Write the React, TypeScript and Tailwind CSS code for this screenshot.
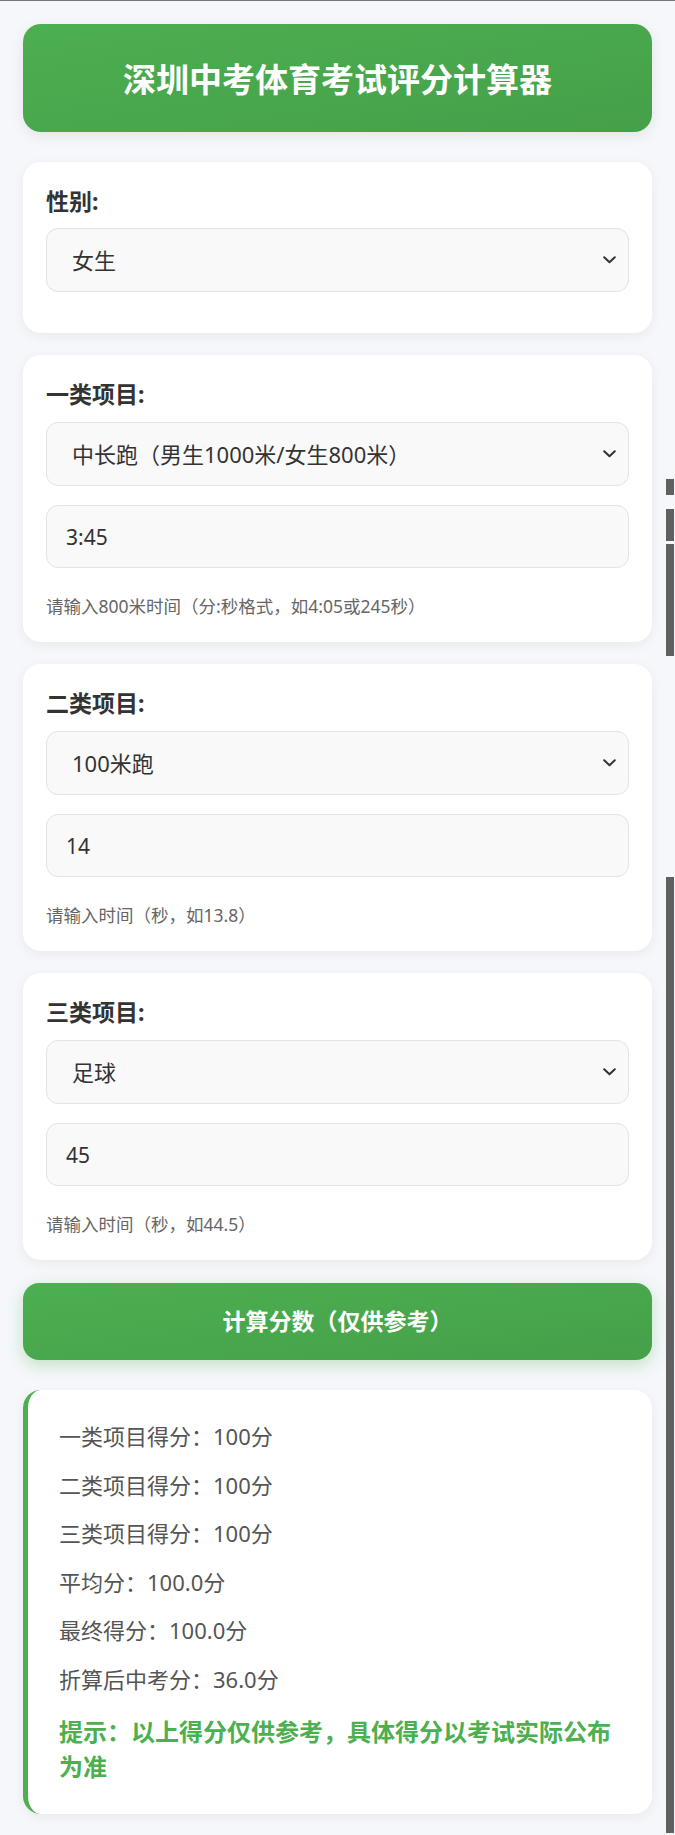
import { useState } from 'react';

interface FieldCardProps {
    label: string;
    options: string[];
    value?: string;
    hint?: string;
}

const Chevron = () => (
    <svg className="pointer-events-none absolute right-[13px] top-1/2 -translate-y-1/2" width="13" height="8" viewBox="0 0 13 8" fill="none">
        <path d="M1.2 1.2 6.5 6.3l5.3-5.1" stroke="#333" strokeWidth="2" strokeLinecap="round" strokeLinejoin="round" />
    </svg>
);

const SelectBox = ({ options, defaultValue }: { options: string[]; defaultValue?: string }) => (
    <div className="relative">
        <select
            defaultValue={defaultValue ?? options[0]}
            className="block h-[64px] w-full appearance-none rounded-[12px] border border-[#e3e3e3] bg-[#f9f9f9] pl-[25px] pr-10 text-[22px] text-[#333] outline-none"
        >
            {options.map((o) => (
                <option key={o}>{o}</option>
            ))}
        </select>
        <Chevron />
    </div>
);

const FieldCard = ({ label, options, value, hint }: FieldCardProps) => {
    const [text, setText] = useState(value ?? '');

    return (
        <div className="flex flex-col rounded-[18px] bg-white p-[23px] shadow-[0_3px_12px_rgba(0,0,0,0.06)]">
            <label className="mb-[11px] block text-[23px] font-bold leading-[33px] text-[#333]">{label}</label>
            <SelectBox options={options} />
            <input
                value={text}
                onChange={(e) => setText(e.target.value)}
                className="mt-[19px] block h-[63px] w-full rounded-[12px] border border-[#e3e3e3] bg-[#f9f9f9] pl-[19px] text-[21px] text-[#333] outline-none"
            />
            {hint && <p className="mt-[26px] text-[17.5px] leading-[25px] text-[#666]">{hint}</p>}
        </div>
    );
};

const results = ['一类项目得分：100分', '二类项目得分：100分', '三类项目得分：100分', '平均分：100.0分', '最终得分：100.0分', '折算后中考分：36.0分'];

const App = () => {
    return (
        <div className="relative min-h-[1835px] border-t border-[#777] bg-[#f5f7fa] px-[23px] pb-[22px] pt-[23px] font-['Noto_Sans','Noto_Sans_CJK_SC','Microsoft_YaHei',sans-serif]">
            <div className="mb-[30px] flex h-[108px] items-center justify-center rounded-[18px] bg-gradient-to-br from-[#4caf50] to-[#45a049] shadow-[0_4px_14px_rgba(0,0,0,0.08)]">
                <h1 className="font-['Noto_Sans_CJK_SC',sans-serif] text-[33px] font-bold leading-none text-white">深圳中考体育考试评分计算器</h1>
            </div>

            <div className="flex flex-col gap-[22px]">
                <div className="flex flex-col rounded-[18px] bg-white p-[23px] shadow-[0_3px_12px_rgba(0,0,0,0.06)]">
                    <label className="mb-[10px] block text-[23px] font-bold leading-[33px] text-[#333]">性别:</label>
                    <SelectBox options={['男生', '女生']} defaultValue="女生" />
                    <div className="h-[18px]" />
                </div>
                <FieldCard label="一类项目:" options={['中长跑（男生1000米/女生800米）']} value="3:45" hint="请输入800米时间（分:秒格式，如4:05或245秒）" />
                <FieldCard label="二类项目:" options={['100米跑']} value="14" hint="请输入时间（秒，如13.8）" />
                <FieldCard label="三类项目:" options={['足球']} value="45" hint="请输入时间（秒，如44.5）" />
            </div>

            <button className="mt-[23px] flex h-[77px] w-full items-center justify-center rounded-[16px] bg-gradient-to-br from-[#4caf50] to-[#45a049] text-[23px] font-bold text-white shadow-[0_5px_16px_rgba(76,175,80,0.3)]">
                计算分数（仅供参考）
            </button>

            <div className="mt-[30px] rounded-[18px] border-l-[5px] border-[#4caf50] bg-white pb-[30px] pl-[31px] pr-[30px] pt-[30px] shadow-[0_3px_12px_rgba(0,0,0,0.06)]">
                <div className="flex flex-col gap-[15.6px]">
                    {results.map((r) => (
                        <p key={r} className="text-[22px] leading-[33px] text-[#555]">
                            {r}
                        </p>
                    ))}
                </div>
                <p className="mt-[18px] text-[24px] font-bold leading-[35px] text-[#4caf50]">提示：以上得分仅供参考，具体得分以考试实际公布为准</p>
            </div>

            {/* scrollbar overlay */}
            <div className="absolute right-[1px] top-0 flex w-[8px] flex-col">
                <div className="mt-[478px] h-[16px] bg-[#606060]" />
                <div className="mt-[14px] h-[32px] bg-[#606060]" />
                <div className="mt-[3px] h-[112px] bg-[#606060]" />
                <div className="mt-[221px] h-[956px] bg-[#606060]" />
            </div>
        </div>
    );
};

export default App;
